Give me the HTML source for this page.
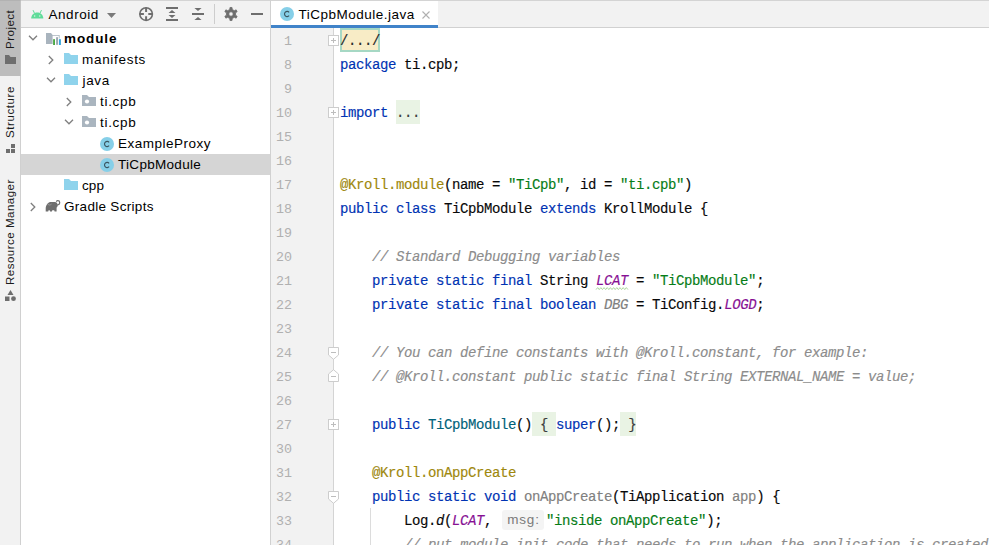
<!DOCTYPE html>
<html>
<head>
<meta charset="utf-8">
<style>
*{box-sizing:border-box;margin:0;padding:0}
html,body{width:989px;height:545px;overflow:hidden;background:#fff}
body{position:relative;font-family:"Liberation Sans",sans-serif;color:#000}
.abs{position:absolute}
svg{position:absolute;overflow:visible}
#strip{left:0;top:0;width:21px;height:545px;background:#f2f2f2;border-right:1px solid #d0d0d0}
#ptab{left:0;top:0;width:21px;height:75.6px;background:#bdbdbd;border-top:1px solid #b2b2b2;border-right:1px solid #c4c4c4}
.vt{position:absolute;transform-origin:0 0;transform:rotate(-90deg);white-space:nowrap;font-size:11.5px;color:#1a1a1a;height:14px;line-height:14px}
#ph{left:21px;top:0;width:249px;height:28px;background:#f2f2f2;border-bottom:1px solid #d1d1d1;border-top:1px solid #d4d4d4}
#pr{left:270px;top:0;width:1px;height:545px;background:#d1d1d1}
.sel{left:21px;top:154px;width:249px;height:21px;background:#d5d5d5}
.tx{position:absolute;height:21px;line-height:21px;font-size:13.5px;white-space:nowrap;color:#000}
#tabbar{left:271px;top:0;width:718px;height:28px;background:#f2f2f2;border-bottom:1px solid #d1d1d1;border-top:1px solid #d4d4d4}
#tab{left:271px;top:1px;width:167px;height:27px;background:#fff;border-bottom:3px solid #4083c9}
#gut{left:271px;top:28px;width:62px;height:517px;background:#f2f2f2}
#gl{left:333px;top:28px;width:1px;height:517px;background:#d4d4d4}
.ln{position:absolute;left:271px;width:21px;text-align:right;height:24px;line-height:27px;font-family:"Liberation Mono",monospace;font-size:13.333px;color:#b0b0b0}
.cl{position:absolute;left:340px;height:24px;line-height:26px;font-family:"Liberation Mono",monospace;font-size:14px;letter-spacing:-0.4px;white-space:pre;color:#080808;-webkit-text-stroke:0.15px}
.k{color:#0033b3}.s{color:#067d17}.a{color:#9e880d}.c{color:#8c8c8c;font-style:italic}
.f{color:#871094;font-style:italic}.u{color:#808080}.ui{color:#808080;font-style:italic}.t{color:#00627a}
.i{font-style:italic}
.fd{background:#e9f3e4;color:#3c3c3c;display:inline-block;vertical-align:top;height:24px;line-height:26px}
.fd1{background:#f8ecc6;border:2px solid #a6d8c4;color:#2a2a2a;display:inline-block;vertical-align:top;height:24px;line-height:22.5px;width:40px;text-indent:-2px}
.fb{position:absolute;width:11px;height:11px;left:328px;background:#fff;border:1px solid #cdcdcd}

.hint{display:inline-block;vertical-align:top;margin:2px 2px 0 2px;width:42px;height:20px;line-height:20px;letter-spacing:0.8px;text-indent:0.8px;border-radius:3px;background:#f4f4f4;color:#7a7a7a;-webkit-text-stroke:0;font-family:"Liberation Sans",sans-serif;font-size:13.5px;text-align:center;font-style:normal}
</style>
</head>
<body>
<div id="strip" class="abs"></div>
<div id="ptab" class="abs"></div>
<div id="ph" class="abs"></div>
<div id="pr" class="abs"></div>
<div class="abs sel"></div>
<div id="tabbar" class="abs"></div>
<div id="tab" class="abs"></div>
<div id="gut" class="abs"></div>
<div id="gl" class="abs"></div>
<div class="vt" id="vProject" style="left:3px;top:49px;font-size:11.5px;letter-spacing:0.5px">Project</div>
<div class="vt" id="vStructure" style="left:3px;top:137.5px;font-size:11.5px;letter-spacing:0.58px">Structure</div>
<div class="vt" id="vResource" style="left:3px;top:284.5px;font-size:11.5px;letter-spacing:0.5px">Resource Manager</div>
<svg style="left:5px;top:55px" width="11" height="9" viewBox="0 0 11 9"><path d="M0 0H4L5.5 2H11V9H0Z" fill="#6e6e6e"/></svg>
<svg style="left:6px;top:144px" width="9" height="9" viewBox="0 0 9 9"><rect x="5" y="0" width="4" height="4" fill="#6e6e6e"/><rect x="0" y="5" width="4" height="4" fill="#6e6e6e"/><rect x="5" y="5" width="4" height="4" fill="#6e6e6e"/></svg>
<svg style="left:5px;top:290px" width="11" height="11" viewBox="0 0 11 11"><path d="M5.5 0L8.5 5H2.5Z" fill="#6e6e6e"/><rect x="0" y="6.5" width="4.5" height="4.5" fill="#6e6e6e"/><circle cx="8.5" cy="8.7" r="2.4" fill="#6e6e6e"/></svg>
<svg style="left:30.5px;top:9.5px" width="12.5" height="8.5" viewBox="0 0 12.5 8.5"><path d="M0.2 8.5C0.2 4.9 2.8 2.4 6.25 2.4S12.3 4.9 12.3 8.5Z" fill="#5fdc99"/><path d="M3.4 3L2.2 0.5M9.1 3L10.3 0.5" stroke="#5fdc99" stroke-width="1" fill="none" stroke-linecap="round"/><circle cx="3.7" cy="6" r="0.65" fill="#f2f2f2"/><circle cx="8.8" cy="6" r="0.65" fill="#f2f2f2"/></svg>
<div class="tx" id="tAndroid" style="left:48.5px;top:4px;letter-spacing:0.55px">Android</div>
<svg style="left:107.2px;top:13px" width="9" height="5" viewBox="0 0 9 5"><path d="M0 0H9L4.5 5Z" fill="#7a7a7a"/></svg>
<svg style="left:138px;top:6px" width="16" height="16" viewBox="0 0 16 16"><circle cx="8.1" cy="8.1" r="6.3" fill="none" stroke="#6e6e6e" stroke-width="1.6"/><path d="M8.1 1.5V5.9M8.1 10.3V14.7M1.5 8.1H5.9M10.3 8.1H14.7" stroke="#6e6e6e" stroke-width="2"/></svg>
<svg style="left:164px;top:6px" width="16" height="16" viewBox="0 0 16 16"><path d="M2 2H14M2 14H14" stroke="#6e6e6e" stroke-width="2"/><path d="M8 4.1L11.5 7H4.5ZM8 11.9L11.5 9H4.5Z" fill="#6e6e6e"/></svg>
<svg style="left:190px;top:6px" width="16" height="16" viewBox="0 0 16 16"><path d="M2 8H14" stroke="#6e6e6e" stroke-width="2"/><path d="M8 5L11.6 1.9H4.4ZM8 11L11.6 14.1H4.4Z" fill="#6e6e6e"/></svg>
<div class="abs" style="left:214px;top:4px;width:1px;height:20px;background:#cdcdcd"></div>
<svg style="left:223px;top:6px" width="16" height="16" viewBox="0 0 16 16"><path d="M6.97 1.48 L9.03 1.48 L9.26 3.47 L11.29 4.64 L13.13 3.85 L14.16 5.63 L12.55 6.83 L12.55 9.17 L14.16 10.37 L13.13 12.15 L11.29 11.36 L9.26 12.53 L9.03 14.52 L6.97 14.52 L6.74 12.53 L4.71 11.36 L2.87 12.15 L1.84 10.37 L3.45 9.17 L3.45 6.83 L1.84 5.63 L2.87 3.85 L4.71 4.64 L6.74 3.47Z M5.80 8.00a2.2 2.2 0 1 0 4.4 0a2.2 2.2 0 1 0 -4.4 0Z" fill="#6e6e6e" fill-rule="evenodd" stroke="#6e6e6e" stroke-width="0.8" stroke-linejoin="round"/></svg>
<div class="abs" style="left:251px;top:13px;width:12px;height:2px;background:#6e6e6e"></div>
<svg style="left:27.5px;top:35px" width="10" height="6" viewBox="0 0 10 6"><path d="M1 0.8L5 4.8L9 0.8" fill="none" stroke="#7f7f7f" stroke-width="1.3"/></svg>
<svg style="left:46px;top:33px" width="15" height="12" viewBox="0 0 15 12"><path d="M0 0H5L6.6 2H13.6V5.6H12.8V2.8H6.6V11H0Z" fill="#a9b4be"/><rect x="7.1" y="6.2" width="1.9" height="5.8" fill="#4aa843"/><rect x="10.1" y="4.2" width="1.9" height="7.6" fill="#9aa7b0"/><rect x="12.9" y="6.2" width="2" height="5.8" fill="#35a6db"/></svg>
<div class="tx" id="tModule" style="left:64px;top:28px;letter-spacing:0.9px;font-weight:bold">module</div>
<svg style="left:47.5px;top:54.5px" width="6" height="10" viewBox="0 0 6 10"><path d="M0.8 1L4.8 5L0.8 9" fill="none" stroke="#7f7f7f" stroke-width="1.3"/></svg>
<svg style="left:64px;top:53px" width="14" height="11" viewBox="0 0 14 11"><path d="M0 0H5L7 2H14V11H0Z" fill="#8fd3ec"/></svg>
<div class="tx" id="tManifests" style="left:82px;top:49px;letter-spacing:0.7px">manifests</div>
<svg style="left:45.5px;top:77px" width="10" height="6" viewBox="0 0 10 6"><path d="M1 0.8L5 4.8L9 0.8" fill="none" stroke="#7f7f7f" stroke-width="1.3"/></svg>
<svg style="left:64px;top:74px" width="14" height="11" viewBox="0 0 14 11"><path d="M0 0H5L7 2H14V11H0Z" fill="#8fd3ec"/></svg>
<div class="tx" id="tJava" style="left:82.5px;top:70px;letter-spacing:0.65px">java</div>
<svg style="left:65.5px;top:96.5px" width="6" height="10" viewBox="0 0 6 10"><path d="M0.8 1L4.8 5L0.8 9" fill="none" stroke="#7f7f7f" stroke-width="1.3"/></svg>
<svg style="left:82px;top:95px" width="14" height="11" viewBox="0 0 14 11"><path d="M0 0H5L7 2H14V11H0Z" fill="#aab5bf"/><circle cx="5" cy="6.5" r="2.1" fill="#fff"/></svg>
<div class="tx" id="tPkg1" style="left:100px;top:91px;letter-spacing:0.7px">ti.cpb</div>
<svg style="left:63.5px;top:119px" width="10" height="6" viewBox="0 0 10 6"><path d="M1 0.8L5 4.8L9 0.8" fill="none" stroke="#7f7f7f" stroke-width="1.3"/></svg>
<svg style="left:82px;top:116px" width="14" height="11" viewBox="0 0 14 11"><path d="M0 0H5L7 2H14V11H0Z" fill="#aab5bf"/><circle cx="5" cy="6.5" r="2.1" fill="#fff"/></svg>
<div class="tx" id="tPkg2" style="left:100px;top:112px;letter-spacing:0.7px">ti.cpb</div>
<svg style="left:100px;top:136.5px" width="14" height="14" viewBox="0 0 14 14"><circle cx="7" cy="7" r="7" fill="#86cfe8"/><path d="M9.1 5.3A2.6 2.6 0 1 0 9.1 8.7" fill="none" stroke="#3a5560" stroke-width="1.15"/></svg>
<div class="tx" id="tEx" style="left:118px;top:133px;letter-spacing:0.5px">ExampleProxy</div>
<svg style="left:100px;top:157.5px" width="14" height="14" viewBox="0 0 14 14"><circle cx="7" cy="7" r="7" fill="#86cfe8"/><path d="M9.1 5.3A2.6 2.6 0 1 0 9.1 8.7" fill="none" stroke="#3a5560" stroke-width="1.15"/></svg>
<div class="tx" id="tTi" style="left:118px;top:154px;letter-spacing:0.3px">TiCpbModule</div>
<svg style="left:64px;top:179px" width="14" height="11" viewBox="0 0 14 11"><path d="M0 0H5L7 2H14V11H0Z" fill="#8fd3ec"/></svg>
<div class="tx" id="tCpp" style="left:82px;top:175px;letter-spacing:0.1px">cpp</div>
<svg style="left:29.5px;top:201.5px" width="6" height="10" viewBox="0 0 6 10"><path d="M0.8 1L4.8 5L0.8 9" fill="none" stroke="#7f7f7f" stroke-width="1.3"/></svg>
<svg style="left:45px;top:200px" width="16" height="12" viewBox="0 0 16 12"><path d="M0.7 11.4V8.2C0.7 6.2 1.4 4.8 2.8 3.4C3.8 2.4 4.8 2 6 2H9.8C11.5 2 12.6 3.2 12.6 4.9C12.6 6.4 12.2 7 11.6 7.6V11.4H9.6L9.2 10.2H7.3L6.9 11.4H5.1L4.7 10.2H3.6L3.2 11.4Z" fill="#6e6e6e"/><path d="M11.8 5.2C13.6 5 14.8 3.8 14.7 2.4C14.6 1.2 13.8 0.6 12.9 0.6C12.2 0.6 11.7 0.9 11.5 1.3" fill="none" stroke="#6e6e6e" stroke-width="1.2" stroke-linecap="round"/><path d="M2.4 3.6C3.4 5.6 5.4 5.2 6.6 4" fill="none" stroke="#a8a8a8" stroke-width="0.7"/></svg>
<div class="tx" id="tGradle" style="left:64px;top:196px;letter-spacing:0.3px">Gradle Scripts</div>
<svg style="left:280px;top:7px" width="14" height="14" viewBox="0 0 14 14"><circle cx="7" cy="7" r="7" fill="#86cfe8"/><path d="M9.1 5.3A2.6 2.6 0 1 0 9.1 8.7" fill="none" stroke="#3a5560" stroke-width="1.15"/></svg>
<div class="tx" id="tTab" style="left:298.5px;top:4px;letter-spacing:0.5px">TiCpbModule.java</div>
<svg style="left:422px;top:10.5px" width="8" height="8" viewBox="0 0 8 8"><path d="M0.5 0.5L7.5 7.5M7.5 0.5L0.5 7.5" stroke="#b0b0b0" stroke-width="1.1" fill="none"/></svg>
<div class="ln" style="top:28px">1</div>
<div class="cl" style="top:28px"><span class="fd1">/.../</span></div>
<div class="ln" style="top:52px">8</div>
<div class="cl" style="top:52px"><span class="k">package</span> ti.cpb;</div>
<div class="ln" style="top:76px">9</div>
<div class="ln" style="top:100px">10</div>
<div class="cl" style="top:100px"><span class="k">import</span> <span class="fd">...</span></div>
<div class="ln" style="top:124px">15</div>
<div class="ln" style="top:148px">16</div>
<div class="ln" style="top:172px">17</div>
<div class="cl" style="top:172px"><span class="a">@Kroll.module</span>(name = <span class="s">"TiCpb"</span>, id = <span class="s">"ti.cpb"</span>)</div>
<div class="ln" style="top:196px">18</div>
<div class="cl" style="top:196px"><span class="k">public class</span> TiCpbModule <span class="k">extends</span> KrollModule {</div>
<div class="ln" style="top:220px">19</div>
<div class="ln" style="top:244px">20</div>
<div class="cl" style="top:244px">    <span class="c">// Standard Debugging variables</span></div>
<div class="ln" style="top:268px">21</div>
<div class="cl" style="top:268px">    <span class="k">private static final</span> String <span class="f">LCAT</span> = <span class="s">"TiCpbModule"</span>;</div>
<div class="ln" style="top:292px">22</div>
<div class="cl" style="top:292px">    <span class="k">private static final boolean</span> <span class="ui">DBG</span> = TiConfig.<span class="f">LOGD</span>;</div>
<div class="ln" style="top:316px">23</div>
<div class="ln" style="top:340px">24</div>
<div class="cl" style="top:340px">    <span class="c">// You can define constants with @Kroll.constant, for example:</span></div>
<div class="ln" style="top:364px">25</div>
<div class="cl" style="top:364px">    <span class="c">// @Kroll.constant public static final String EXTERNAL_NAME = value;</span></div>
<div class="ln" style="top:388px">26</div>
<div class="ln" style="top:412px">27</div>
<div class="cl" style="top:412px">    <span class="k">public</span> <span class="t">TiCpbModule</span>()<span class="fd"> { </span><span class="k">super</span>();<span class="fd"> }</span></div>
<div class="ln" style="top:436px">30</div>
<div class="ln" style="top:460px">31</div>
<div class="cl" style="top:460px">    <span class="a">@Kroll.onAppCreate</span></div>
<div class="ln" style="top:484px">32</div>
<div class="cl" style="top:484px">    <span class="k">public static void</span> <span class="u">onAppCreate</span>(TiApplication <span class="u">app</span>) {</div>
<div class="ln" style="top:508px">33</div>
<div class="cl" style="top:508px">        Log.<span class="i">d</span>(<span class="f">LCAT</span>, <span class="hint">msg:</span><span class="s">"inside onAppCreate"</span>);</div>
<div class="ln" style="top:532px">34</div>
<div class="cl" style="top:532px">        <span class="c">// put module init code that needs to run when the application is created</span></div>
<div class="fb" style="top:35px"></div>
<div class="abs" style="left:331px;top:40px;width:5px;height:1px;background:#bdbdbd"></div>
<div class="abs" style="left:333px;top:38px;width:1px;height:5px;background:#bdbdbd"></div>
<div class="fb" style="top:107px"></div>
<div class="abs" style="left:331px;top:112px;width:5px;height:1px;background:#bdbdbd"></div>
<div class="abs" style="left:333px;top:110px;width:1px;height:5px;background:#bdbdbd"></div>
<div class="fb" style="top:419px"></div>
<div class="abs" style="left:331px;top:424px;width:5px;height:1px;background:#bdbdbd"></div>
<div class="abs" style="left:333px;top:422px;width:1px;height:5px;background:#bdbdbd"></div>
<svg style="left:328px;top:347px" width="11" height="13" viewBox="0 0 11 13"><path d="M0.5 0.5H10.5V8L5.5 12.3L0.5 8Z" fill="#fff" stroke="#cdcdcd" stroke-width="1"/><path d="M3 5.5H8" stroke="#bdbdbd" stroke-width="1"/></svg>
<svg style="left:328px;top:491px" width="11" height="13" viewBox="0 0 11 13"><path d="M0.5 0.5H10.5V8L5.5 12.3L0.5 8Z" fill="#fff" stroke="#cdcdcd" stroke-width="1"/><path d="M3 5.5H8" stroke="#bdbdbd" stroke-width="1"/></svg>
<svg style="left:328px;top:369px" width="11" height="13" viewBox="0 0 11 13"><path d="M0.5 12.5H10.5V5L5.5 0.7L0.5 5Z" fill="#fff" stroke="#cdcdcd" stroke-width="1"/><path d="M3 7.5H8" stroke="#bdbdbd" stroke-width="1"/></svg>
<svg style="left:596px;top:287px" width="32" height="3.2" viewBox="0 0 32 3.2"><path d="M0.0 2.6 L1.6 0.6 L3.2 2.6 L4.8 0.6 L6.4 2.6 L8.0 0.6 L9.6 2.6 L11.2 0.6 L12.8 2.6 L14.4 0.6 L16.0 2.6 L17.6 0.6 L19.2 2.6 L20.8 0.6 L22.4 2.6 L24.0 0.6 L25.6 2.6 L27.2 0.6 L28.8 2.6 L30.4 0.6 L32.0 2.6" fill="none" stroke="#a5d296" stroke-width="0.9"/></svg>
<div class="abs" style="left:370px;top:508px;width:1px;height:37px;background:#dcdcdc"></div>
</body>
</html>
